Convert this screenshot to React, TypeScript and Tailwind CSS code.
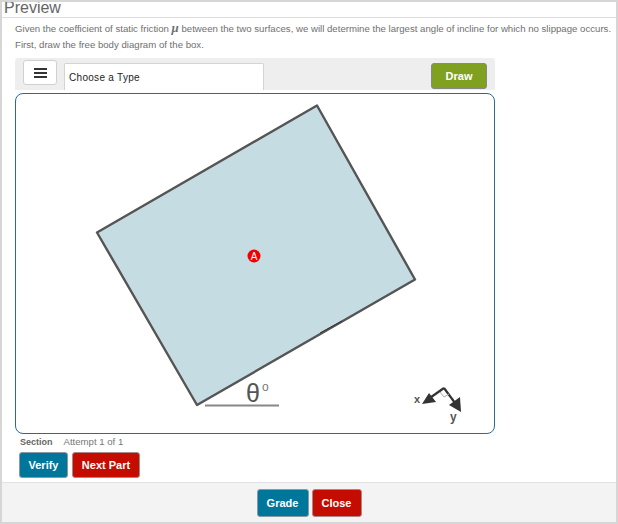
const Diagram = () => {
  return (
    <svg width="478" height="339" viewBox="16 94 478 339" className="block">
      <polygon points="317,105.5 415,279.5 197,405 97,232.5" fill="#c5dce2" stroke="#555" strokeWidth="2.4" strokeLinejoin="round" />
      <line x1="320" y1="333" x2="342" y2="321" stroke="#333" strokeWidth="1" />
      <line x1="205" y1="405.5" x2="279" y2="405.5" stroke="#888" strokeWidth="2" />
      <text x="246" y="402" fontSize="25" fill="#555" fontFamily="'Liberation Sans', sans-serif">θ</text>
      <text x="262" y="391" fontSize="12" fill="#777" fontFamily="'Liberation Sans', sans-serif">o</text>
      <circle cx="254" cy="256" r="6.5" fill="#f00000" />
      <text x="254" y="260" fontSize="10" fill="#fff" textAnchor="middle" fontFamily="'Liberation Sans', sans-serif">A</text>
      <g stroke="#333" fill="none" strokeWidth="2.2">
        <path d="M444 388 L427 400" />
        <path d="M444 388 L458 407" />
      </g>
      <polygon points="422,404 429,393 436,402" fill="#333" />
      <polygon points="461,412 449,405 460,397" fill="#333" />
      <path d="M440 392 L444 397 L449 394" stroke="#aaa" fill="none" strokeWidth="1" />
      <text x="414" y="403" fontSize="11" fontWeight="700" fill="#555" fontFamily="'Liberation Sans', sans-serif">x</text>
      <text x="450" y="421" fontSize="12" fontWeight="700" fill="#555" fontFamily="'Liberation Sans', sans-serif">y</text>
    </svg>
  )
}

const App = () => {
  return (
    <div className="h-[524px] w-[618px] overflow-hidden border-2 border-[#d6d6d6] bg-white font-['Liberation_Sans',sans-serif] flex flex-col">
      <div className="h-[16px] border-b border-[#dcdcdc] pl-[2px] shrink-0">
        <h1 className="text-[16px] leading-[12px] text-[#666]">Preview</h1>
      </div>
      <div className="flex-1 pl-[13px]">
        <p className="mt-[3px] text-[9.65px] leading-[16px] text-[#6f6f6f] whitespace-nowrap">
          Given the coefficient of static friction <span className="font-['Liberation_Serif',serif] italic font-bold text-[13px] leading-[10px]">μ</span> between the two surfaces, we will determine the largest angle of incline for which no slippage occurs.
        </p>
        <p className="text-[9.65px] leading-[16px] text-[#6f6f6f]">First, draw the free body diagram of the box.</p>

        <div className="mt-[5px] flex h-[32px] w-[480px] items-start rounded-t-[3px] bg-[#eeeeee] pl-[8px] pr-[8px]">
          <button className="mt-[2px] flex h-[25px] w-[34px] flex-col items-center justify-center gap-[2px] rounded-[3px] border border-[#d0d0d0] bg-white">
            <span className="h-[2px] w-[13px] bg-[#333]"></span>
            <span className="h-[2px] w-[13px] bg-[#333]"></span>
            <span className="h-[2px] w-[13px] bg-[#333]"></span>
          </button>
          <div className="ml-[7px] mt-[5px] flex h-[27px] w-[200px] items-center rounded-t-[2px] border border-b-0 border-[#d4d4d4] bg-white pl-[4px] text-[10px] tracking-[0.3px] text-[#222]">
            Choose a Type
          </div>
          <button className="ml-auto mt-[5px] h-[26px] w-[56px] rounded-[3px] border border-[#888] bg-[#7fa11f] text-[11px] font-bold text-white">Draw</button>
        </div>

        <div className="mt-[3px] h-[341px] w-[480px] overflow-hidden rounded-[8px] border border-[#2f6797] bg-white">
          <Diagram />
        </div>

        <div className="mt-[3px] flex h-[11px] items-center pl-[5px] text-[9px] text-[#666]">
          <span className="font-bold">Section</span>
          <span className="ml-[11px] text-[9.6px] text-[#777]">Attempt 1 of 1</span>
        </div>
        <div className="mt-[4px] flex gap-[4px] pl-[4px]">
          <button className="h-[26px] w-[49px] rounded-[3px] border border-[#8a9aa5] bg-[#00769a] text-[11px] font-bold text-white">Verify</button>
          <button className="h-[26px] w-[68px] rounded-[3px] border border-[#a88] bg-[#c40d00] text-[11px] font-bold text-white">Next Part</button>
        </div>
      </div>
      <div className="flex h-[40px] shrink-0 items-start justify-center gap-[3px] border-t border-[#e2e2e2] bg-[#f3f3f3] pt-[6px]">
        <button className="h-[28px] w-[52px] rounded-[3px] border border-[#8a9aa5] bg-[#00769a] text-[11px] font-bold text-white">Grade</button>
        <button className="h-[28px] w-[50px] rounded-[3px] border border-[#a88] bg-[#c40d00] text-[11px] font-bold text-white">Close</button>
      </div>
    </div>
  )
}

export default App
